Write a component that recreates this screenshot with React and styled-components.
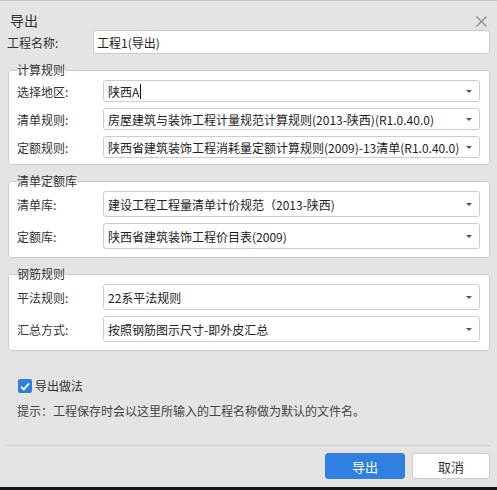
import React from "react";
import styled, { createGlobalStyle } from "styled-components";

const GlobalStyle = createGlobalStyle`
  html, body {
    margin: 0;
    padding: 0;
    background: #151515;
  }
  body {
    font-family: "Noto Sans CJK SC", "Noto Sans", sans-serif;
    font-size: 12px;
    color: #333;
  }
`;

const Dialog = styled.div`
  box-sizing: border-box;
  width: 497px;
  height: 487px;
  background: #e4e4e4;
  border-top: 1px solid #c8c8c8;
  padding: 9px 7px 0 7px;
  display: flex;
  flex-direction: column;
`;

const Header = styled.div`
  display: flex;
  align-items: center;
  justify-content: space-between;
  height: 20px;
  padding-left: 3px;
`;

const Title = styled.div`
  font-size: 14px;
  line-height: 20px;
  color: #333;
`;

const CloseButton = styled.button`
  border: 0;
  background: none;
  padding: 0;
  margin: 3px 3px 0 0;
  width: 12px;
  height: 12px;
  display: flex;
  align-items: center;
  justify-content: center;
  cursor: pointer;
`;

const Row = styled.div`
  display: grid;
  grid-template-columns: 86px 1fr;
  align-items: center;
  height: ${(p) => p.$h}px;
`;

const Label = styled.label`
  font-size: 12px;
  color: #333;
  white-space: nowrap;
`;

const TextInput = styled.div`
  box-sizing: border-box;
  height: 100%;
  background: #fff;
  border: 1px solid #cccccc;
  border-radius: 3px;
  padding-left: 3px;
  display: flex;
  align-items: center;
  font-size: 12px;
  color: #222;
`;

const Group = styled.fieldset`
  margin: 9px 0 0 1px;
  border: 1px solid #cbcbcb;
  border-radius: 3px;
  background: #fff;
  padding: 3px 9px ${(p) => p.$pb}px 8px;
  min-width: 0;
`;

const Legend = styled.legend`
  padding: 0;
  font-size: 12px;
  line-height: 14px;
  color: #333;
`;

const Rows = styled.div`
  display: flex;
  flex-direction: column;
  gap: 6px;
`;

const Select = styled.div`
  box-sizing: border-box;
  height: 100%;
  background: #fff;
  border: 1px solid #cccccc;
  border-radius: 3px;
  padding: 0 7px 0 4px;
  display: flex;
  align-items: center;
  justify-content: space-between;
  font-size: 12px;
  color: #222;
  white-space: nowrap;
  overflow: hidden;
`;

const Value = styled.span`
  display: flex;
  align-items: center;
`;

const Caret = styled.span`
  display: inline-block;
  width: 1px;
  height: 15px;
  background: #111;
  margin-left: 1px;
`;

const Arrow = styled.span`
  width: 0;
  height: 0;
  border-left: 3px solid transparent;
  border-right: 3px solid transparent;
  border-top: 3px solid #555;
  flex-shrink: 0;
`;

const CheckRow = styled.label`
  display: flex;
  align-items: center;
  gap: 3px;
  margin-top: 26px;
  padding-left: 11px;
  line-height: 18px;
  font-size: 12px;
  color: #333;
`;

const Box = styled.span`
  width: 14px;
  height: 14px;
  border-radius: 2px;
  background: #2f7fe0;
  display: flex;
  align-items: center;
  justify-content: center;
`;

const Hint = styled.div`
  margin-top: 7px;
  padding-left: 10px;
  line-height: 18px;
  font-size: 12px;
  color: #444;
`;

const Divider = styled.div`
  margin-top: 25px;
  height: 1px;
  background: #c9c9c9;
`;

const Footer = styled.div`
  display: flex;
  justify-content: flex-end;
  gap: 7px;
  margin-top: 7px;
`;

const Button = styled.button`
  box-sizing: border-box;
  width: ${(p) => (p.$primary ? 80 : 78)}px;
  height: 26px;
  border-radius: 3px;
  border: 1px solid ${(p) => (p.$primary ? "#2f80e0" : "#cccccc")};
  background: ${(p) => (p.$primary ? "#2f80e0" : "#fff")};
  color: ${(p) => (p.$primary ? "#fff" : "#333")};
  font-family: "Noto Sans CJK SC", sans-serif;
  font-size: 13px;
  padding: 0;
  cursor: pointer;
`;

const groups = [
  {
    title: "计算规则",
    h: 22,
    pb: 6,
    rows: [
      ["选择地区:", "陕西A", true],
      ["清单规则:", "房屋建筑与装饰工程计量规范计算规则(2013-陕西)(R1.0.40.0)"],
      ["定额规则:", "陕西省建筑装饰工程消耗量定额计算规则(2009)-13清单(R1.0.40.0)"],
    ],
  },
  {
    title: "清单定额库",
    h: 26,
    pb: 8,
    rows: [
      ["清单库:", "建设工程工程量清单计价规范（2013-陕西)"],
      ["定额库:", "陕西省建筑装饰工程价目表(2009)"],
    ],
  },
  {
    title: "钢筋规则",
    h: 26,
    pb: 8,
    rows: [
      ["平法规则:", "22系平法规则"],
      ["汇总方式:", "按照钢筋图示尺寸-即外皮汇总"],
    ],
  },
];

export default function App() {
  return (
    <>
      <GlobalStyle />
      <Dialog>
        <Header>
          <Title>导出</Title>
          <CloseButton aria-label="关闭">
            <svg width="11" height="11" viewBox="0 0 11 11">
              <path d="M0.5 0.5L10.5 10.5M10.5 0.5L0.5 10.5" stroke="#8a8a8a" strokeWidth="1.1" />
            </svg>
          </CloseButton>
        </Header>

        <Row $h={24}>
          <Label>工程名称:</Label>
          <TextInput>工程1(导出)</TextInput>
        </Row>

        {groups.map((g) => (
          <Group key={g.title} $pb={g.pb}>
            <Legend>{g.title}</Legend>
            <Rows>
              {g.rows.map(([label, value, editing]) => (
                <Row key={label} $h={g.h}>
                  <Label>{label}</Label>
                  <Select>
                    <Value>
                      {value}
                      {editing && <Caret />}
                    </Value>
                    <Arrow />
                  </Select>
                </Row>
              ))}
            </Rows>
          </Group>
        ))}

        <CheckRow>
          <Box>
            <svg width="10" height="9" viewBox="0 0 10 9">
              <path d="M1 4.6L3.8 7.4L9 1.4" fill="none" stroke="#fff" strokeWidth="1.8" />
            </svg>
          </Box>
          导出做法
        </CheckRow>
        <Hint>提示：工程保存时会以这里所输入的工程名称做为默认的文件名。</Hint>

        <Divider />
        <Footer>
          <Button $primary>导出</Button>
          <Button>取消</Button>
        </Footer>
      </Dialog>
    </>
  );
}
